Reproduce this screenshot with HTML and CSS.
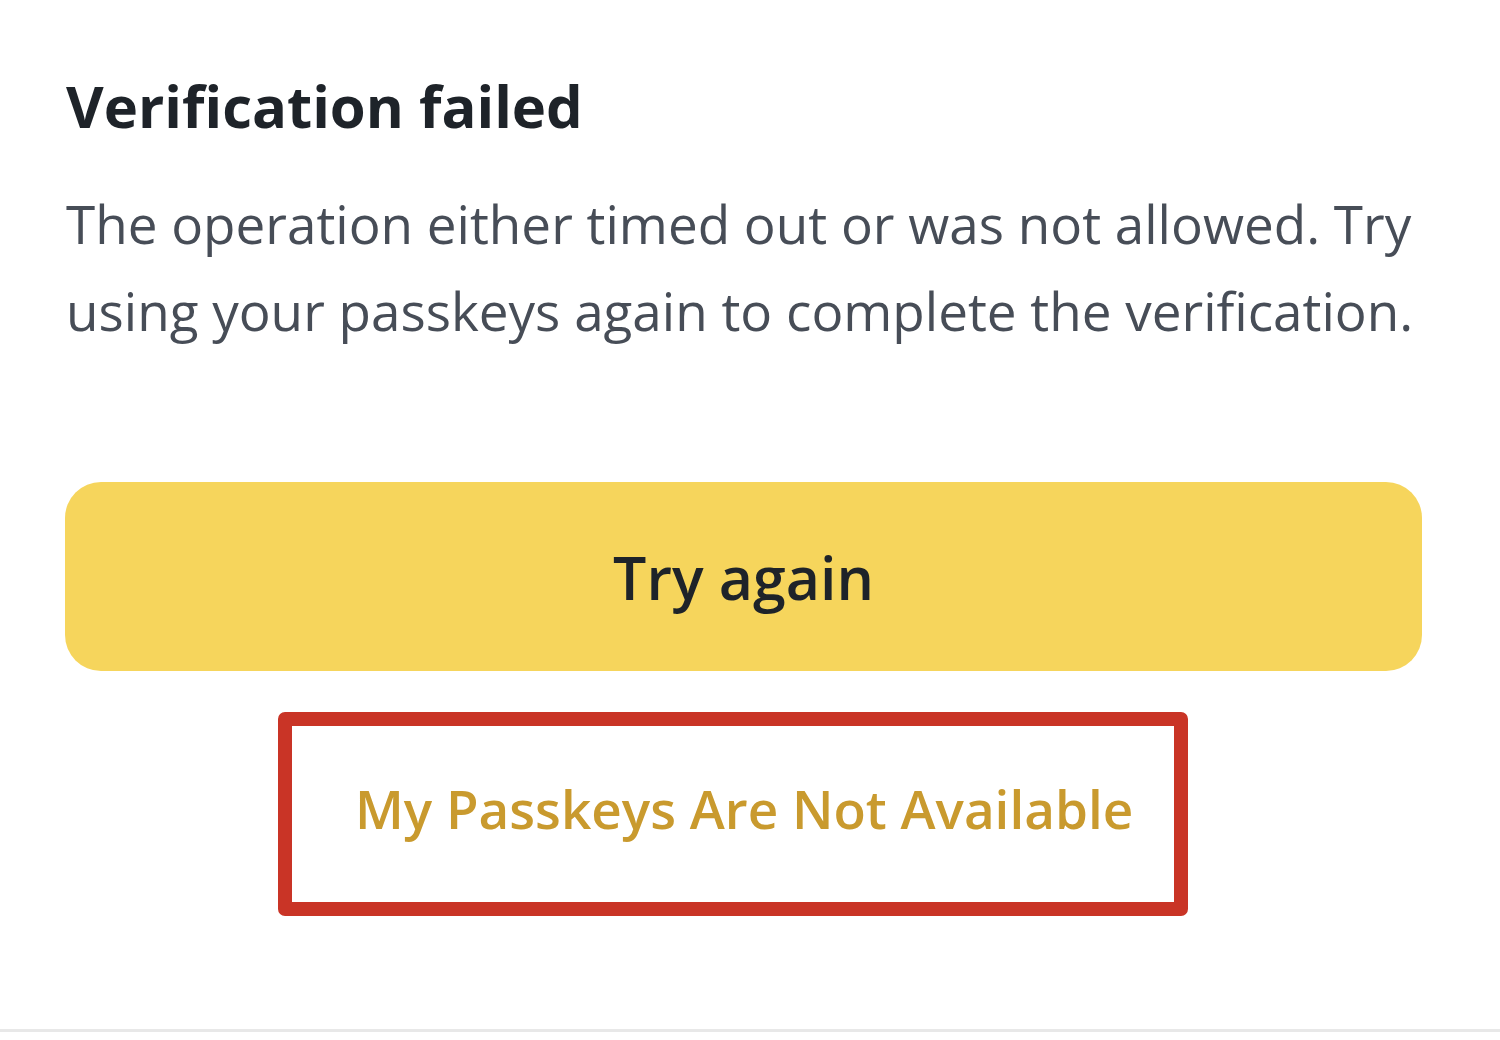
FILE: index.html
```html
<!DOCTYPE html>
<html lang="en">
	<head>
		<meta content="text/html;charset=utf-8" http-equiv="Content-Type"/>
		<title>Verification failed</title>
		<link rel="stylesheet" href="styles.css">
	</head>
	<body>
		<div class="sheet">
			<div class="content">
				<h1 class="title">Verification failed</h1>
				<p class="message">The operation either timed out or was not allowed. Try using your passkeys again to complete the verification.</p>
				<button class="retry">Try again</button>
				<div class="alt-row">
					<a class="alt-link" href="#">My Passkeys Are Not Available</a>
				</div>
			</div>
			<hr class="divider"/>
		</div>
	</body>
</html>
```

FILE: styles.css
```css
body{
	font-family: "Open Sans", "Noto Sans", sans-serif;
	margin: 0;
	padding: 0;
	background: #fff;
}

.sheet{
	height: 1040px;
	display: flex;
	flex-direction: column;
}

.content{
	flex: 1;
	padding: 66px 78px 0 65px;
}

.title{
	font-size: 58px;
	font-weight: 700;
	color: #1e2329;
	line-height: 80px;
	margin: 0 0 0 1px;
}

.message{
	font-size: 53px;
	line-height: 87px;
	color: #474d57;
	margin: 34px 0 0 1px;
}

.retry{
	display: block;
	width: 100%;
	height: 189px;
	margin-top: 128px;
	border: none;
	border-radius: 36px;
	background: #f6d55c;
	color: #1e2329;
	font-family: inherit;
	font-size: 59px;
	font-weight: 600;
	padding: 0;
}

.alt-row{
	margin-top: 41px;
	padding-left: 213px;
}

.alt-link{
	display: inline-flex;
	align-items: center;
	box-sizing: border-box;
	width: 910px;
	height: 204px;
	padding: 0 0 12px 63px;
	border: 14px solid #c93426;
	border-radius: 7px;
	color: #c99a2e;
	font-size: 53px;
	font-weight: 600;
	text-decoration: none;
}

.divider{
	border: none;
	border-top: 3px solid #e8e8e8;
	margin: 0 0 8px;
}
```
